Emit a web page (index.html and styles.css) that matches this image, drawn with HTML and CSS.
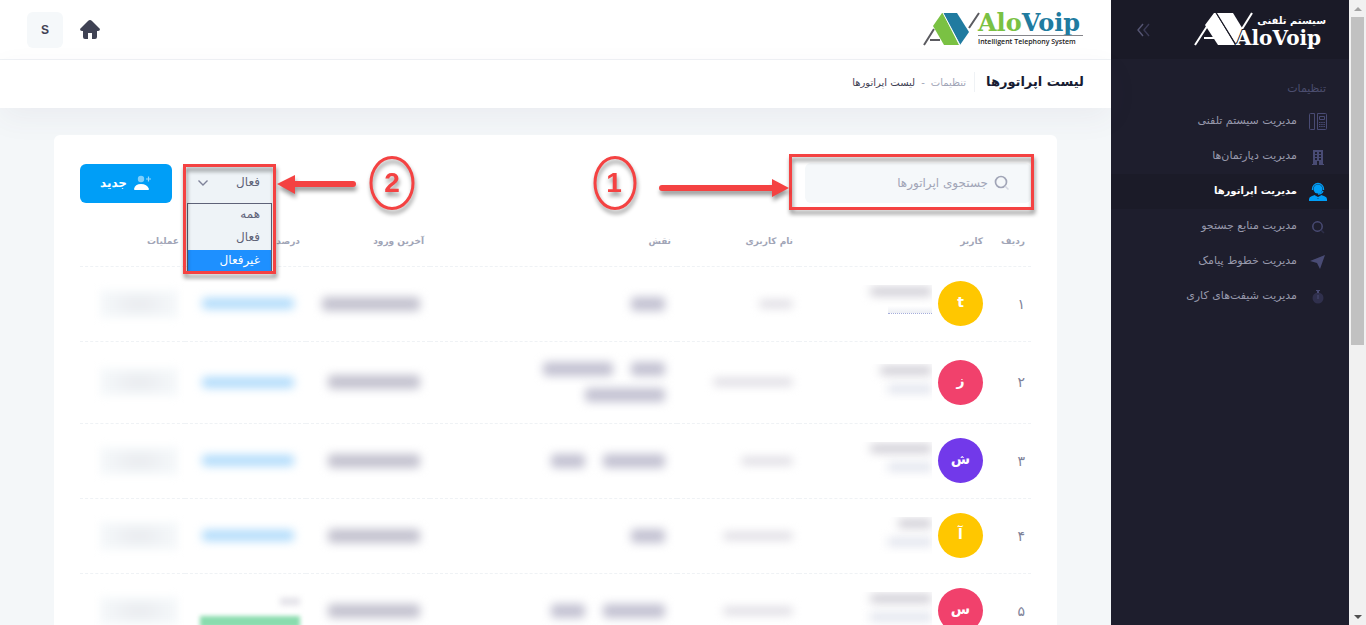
FILE: index.html
```html
<!DOCTYPE html>
<html lang="fa" dir="rtl">
<head>
<meta charset="utf-8">
<title>لیست اپراتورها</title>
<link rel="stylesheet" href="styles.css">
</head>
<body>
<div class="app">
  <div class="scrollbar" aria-hidden="true">
    <span class="scroll-up"></span>
    <span class="scroll-thumb"></span>
    <span class="scroll-down"></span>
  </div>

  <aside class="sidebar">
    <div class="brand">
      <svg class="brand-logo" width="132" height="36" viewBox="0 0 132 36" direction="ltr" role="img" aria-label="AloVoip">
        <path d="M1 33 21 2M10 26h14" stroke="#fff" stroke-width="2" fill="none"/>
        <path d="M20 1 11 13l13 20h17L22 1z" fill="#fff"/>
        <path d="M23 1h16l11 18-8 13z" fill="#fff"/>
        <path d="M22 1 42 33" stroke="#1a1a27"/>
        <path d="M58 1 43 25" stroke="#fff" stroke-width="2"/>
        <text x="132" y="12" class="logo-fa" direction="rtl">سیستم تلفنی</text>
        <text x="42" y="33" class="logo-light">AloVoip</text>
      </svg>
      <button class="collapse" type="button" aria-label="بستن منو">
        <svg width="14" height="14" viewBox="0 0 14 14" fill="none" stroke-width="1.4"><path d="M6 1 1 7l5 6" stroke="#565674"/><path d="M12 1 7 7l5 6" stroke="#3b3b56"/></svg>
      </button>
    </div>
    <nav class="menu">
      <h4 class="menu-title">تنظیمات</h4>
      <a class="menu-item" href="#"><svg width="18" height="18" viewBox="0 0 18 18" fill="none" stroke="#494b74"><path d="M1.500.5h4v16h-4q-1 0-1-1v-14q0-1 1-1zM8.500.500h8q1 0 1 1v14q0 1-1 1h-8zM10.500 3.500h5v3h-5z"/><path d="M10 9.500h6M10 11.500h6M10 13.500h6" stroke-dasharray="1.500 .7"/></svg><span>مدیریت سیستم تلفنی</span></a>
      <a class="menu-item" href="#"><svg width="18" height="18" viewBox="0 0 18 18"><path fill="#494b74" fill-rule="evenodd" d="M4 2h10v14h1v1h-5v-4H8v4H3v-1h1zM6 4v2h2V4zm4 0v2h2V4zM6 7v2h2V7zm4 0v2h2V7zM6 10v2h2v-2zm4 0v2h2v-2z"/></svg><span>مدیریت دپارتمان‌ها</span></a>
      <a class="menu-item active" href="#"><svg width="18" height="18" viewBox="0 0 18 18"><circle cx="9" cy="6" r="4.500" fill="#009ef7"/><path d="M3.500 7V6a5.500 5.500 0 0 1 11 0v1M14 8q-1 3-5 3" fill="none" stroke="#009ef7" stroke-width="1.300"/><path d="M0 18v-2q0-2 3-3l3-1 3 4 3-4 3 1q3 1 3 3v2z" fill="#009ef7"/><path d="m7 13 2 1 2-1v3l-2-1-2 1z" fill="#009ef7"/></svg><span>مدیریت اپراتورها</span></a>
      <a class="menu-item" href="#"><svg width="18" height="18" viewBox="0 0 18 18" fill="none" stroke="#494b74"><circle cx="8.500" cy="8.500" r="4.700" stroke-width="1.500"/><path d="m12 12 3 3" stroke="#2d2e49" stroke-width="1.500"/></svg><span>مدیریت منابع جستجو</span></a>
      <a class="menu-item" href="#"><svg width="18" height="18" viewBox="0 0 18 18"><path fill="#494b74" d="M1 8 16 2l-5 14-3-6z"/></svg><span>مدیریت خطوط پیامک</span></a>
      <a class="menu-item" href="#"><svg width="18" height="18" viewBox="0 0 18 18"><circle cx="9" cy="10" r="5.500" fill="#30304d"/><path d="M7 2h4v1H7zM8 3h2v2H8zM13 4l1 1M8.500 7h1v4h-1z" fill="#494b74"/></svg><span>مدیریت شیفت‌های کاری</span></a>
    </nav>
  </aside>

  <div class="content">
    <header class="topbar">
      <svg class="main-logo" width="162" height="36" viewBox="0 0 162 36" direction="ltr" role="img" aria-label="AloVoip Intelligent Telephony System">
        <path d="M2 33 12 17M8 28h10M47 16 57 1" stroke="#5b5b60" stroke-width="2" fill="none"/>
        <path d="M20 1 11 14l11 19h15L21 1z" fill="#7ac143"/>
        <path d="M21 1h14l12 19-9 13z" fill="#207ba0"/>
        <path d="M21 1 38 33" stroke="#fff"/>
        <text x="56" y="19" class="logo-text"><tspan fill="#7ac143">Alo</tspan><tspan fill="#207ba0">Voip</tspan></text>
        <path d="M56 23.500h105" stroke="#85858a"/>
        <text x="56" y="32" class="logo-sub">Intelligent Telephony System</text>
      </svg>
      <div class="top-actions">
        <a class="home" href="#" aria-label="خانه"><svg width="20" height="20" viewBox="0 0 20 20"><path fill="#3f4254" d="M10 0q1 0 2 1l8 8q0 2-2 2h-1v6q0 2-2 2h-3v-6H8v6H5q-2 0-2-2v-6H2q-2 0-2-2l8-8q1-1 2-1z"/></svg></a>
        <button class="user" type="button">S</button>
      </div>
    </header>

    <div class="subheader">
      <h1>لیست اپراتورها</h1>
      <nav class="crumbs"><a href="#">تنظیمات</a><span>-</span><b>لیست اپراتورها</b></nav>
    </div>

    <main class="page">
      <section class="card">
        <div class="toolbar">
          <div class="search">
            <svg width="16" height="16" viewBox="0 0 16 16" fill="none" stroke="#a1a5b7"><circle cx="7" cy="7" r="5.500" stroke-width="1.700"/><path d="m11 11 3.500 3.500" stroke="#d5d8e2" stroke-width="1.500"/></svg>
            <input type="text" aria-label="جستجوی اپراتورها" placeholder="جستجوی اپراتورها">
            <span class="frame frame-search"></span>
            <svg class="note note-one" width="200" height="60" viewBox="0 0 200 60" direction="ltr">
              <ellipse cx="22" cy="29" rx="20" ry="25.500" class="ring"/>
              <text x="21" y="38" class="num">1</text>
              <path d="M69 34h112" class="shaft"/><path d="M179 25v18l17-9z" class="head"/>
            </svg>
          </div>
          <div class="filters">
            <div class="status">
              <select aria-label="وضعیت"><option>فعال</option><option>همه</option><option>غیرفعال</option></select>
              <svg class="chevron" width="10" height="6" viewBox="0 0 10 6" fill="none" stroke="#7e8299" stroke-width="1.400"><path d="m.5.5 4.500 4.500L9.500.5"/></svg>
              <ul class="options" role="listbox" aria-label="وضعیت">
                <li role="option">همه</li>
                <li role="option">فعال</li>
                <li role="option" aria-selected="true" class="selected">غیرفعال</li>
              </ul>
              <span class="frame frame-status"></span>
              <svg class="note note-two" width="144" height="60" viewBox="0 0 144 60" direction="ltr">
                <ellipse cx="118" cy="30" rx="21" ry="25.500" class="ring"/>
                <text x="118" y="39" class="num">2</text>
                <path d="M20 31h59" class="shaft"/><path d="M21 22v19L3 31z" class="head"/>
              </svg>
            </div>
            <button class="new" type="button">
              <svg width="18" height="16" viewBox="0 0 18 16" fill="#fff"><circle cx="7" cy="4" r="3.200" opacity=".5"/><path d="M12 4h5M14.500 1.500v5" stroke="#fff" stroke-width="1.200" opacity=".6"/><path d="M0 14q1-5 7-5t8 5q0 1-1 1H1q-1 0-1-1z"/></svg>
              <span>جدید</span>
            </button>
          </div>
        </div>

        <table class="operators">
          <colgroup><col class="c-row"><col class="c-user"><col class="c-login"><col><col class="c-last"><col class="c-rate"><col class="c-act"></colgroup>
          <thead><tr><th>ردیف</th><th>کاربر</th><th>نام کاربری</th><th>نقش</th><th>آخرین ورود</th><th>درصد</th><th>عملیات</th></tr></thead>
          <tbody>
            <tr>
              <td>۱</td>
              <td><div class="person"><span class="avatar yellow">t</span><span class="masked"><i class="name w62"></i><i class="mail dotted"></i></span></div></td>
              <td><i class="login w34"></i></td>
              <td><div class="roles"><i class="w34"></i></div></td>
              <td><i class="date w98"></i></td><td><i class="rate"></i></td><td><i class="act"></i></td>
            </tr>
            <tr class="tall">
              <td>۲</td>
              <td><div class="person"><span class="avatar red">ز</span><span class="masked"><i class="name w52"></i><i class="mail"></i></span></div></td>
              <td><i class="login w80"></i></td>
              <td><div class="roles"><i class="w34"></i><i class="w70"></i><i class="w80"></i></div></td>
              <td><i class="date"></i></td><td><i class="rate"></i></td><td><i class="act"></i></td>
            </tr>
            <tr>
              <td>۳</td>
              <td><div class="person"><span class="avatar purple">ش</span><span class="masked"><i class="name w62"></i><i class="mail"></i></span></div></td>
              <td><i class="login w52"></i></td>
              <td><div class="roles"><i class="w62"></i><i class="w34"></i></div></td>
              <td><i class="date"></i></td><td><i class="rate"></i></td><td><i class="act"></i></td>
            </tr>
            <tr>
              <td>۴</td>
              <td><div class="person"><span class="avatar yellow">آ</span><span class="masked"><i class="name w34"></i><i class="mail"></i></span></div></td>
              <td><i class="login w70"></i></td>
              <td><div class="roles"><i class="w34"></i></div></td>
              <td><i class="date"></i></td><td><i class="rate"></i></td><td><i class="act"></i></td>
            </tr>
            <tr>
              <td>۵</td>
              <td><div class="person"><span class="avatar red">س</span><span class="masked"><i class="name w62"></i><i class="mail w62"></i></span></div></td>
              <td><i class="login w70"></i></td>
              <td><div class="roles"><i class="w62"></i><i class="w34"></i></div></td>
              <td><i class="date"></i></td><td><div class="progress"><i class="percent"></i><i class="bar"></i></div></td><td><i class="act"></i></td>
            </tr>
          </tbody>
        </table>
      </section>
    </main>
  </div>
</div>
</body>
</html>
```

FILE: styles.css
```css
* { box-sizing: border-box; }

body {
  margin: 0;
  font-family: "DejaVu Sans", sans-serif;
  font-size: 11px;
  color: #7e8299;
  background: #f4f7f9;
}

button, input, select { font: inherit; border: 0; margin: 0; }
a { color: inherit; text-decoration: none; }
svg { overflow: visible; }

.app { display: flex; height: 100vh; overflow: hidden; }

/* Scrollbar */
.scrollbar {
  flex: 0 0 17px;
  display: flex;
  flex-direction: column;
  align-items: center;
  background: #f1f1f1;
}
.scroll-up, .scroll-down { width: 0; border: 4px solid transparent; }
.scroll-up { border-top: 0; border-bottom-color: #a3a3a3; margin: 7px 0 6px; }
.scroll-thumb { flex: 0 0 328px; width: 13px; margin-bottom: auto; background: #c1c1c1; }
.scroll-down { border-bottom: 0; border-top-color: #505050; margin-bottom: 6px; }

/* Sidebar */
.sidebar { flex: 0 0 238px; background: #1e1e2d; }
.brand {
  display: flex;
  justify-content: space-between;
  align-items: center;
  height: 59px;
  padding: 0 23px 0 24px;
  background: #1a1a27;
}
.brand-logo text { fill: #fff; }
.logo-fa { font-size: 10px; font-weight: 700; }
.logo-light { font: 700 20px "DejaVu Serif", serif; paint-order: stroke; stroke: #1a1a27; stroke-width: 2px; }
.collapse { display: flex; padding: 2px; background: none; }
.menu-title {
  margin: 0;
  padding: 21px 23px 0;
  height: 45px;
  line-height: 18px;
  font-size: 11px;
  font-weight: 400;
  color: #4c4e6f;
}
.menu-item {
  display: flex;
  align-items: center;
  gap: 12px;
  height: 35px;
  padding: 0 22px;
  color: #9899ac;
}
.menu-item span { margin-bottom: 2px; }
.menu-item.active { background: #1b1b28; color: #fff; font-size: 10px; font-weight: 700; }

/* Header */
.content { flex: 1; min-width: 0; }
.topbar {
  display: flex;
  justify-content: space-between;
  align-items: center;
  height: 60px;
  padding: 0 27px;
  background: #fff;
  border-bottom: 1px solid #eff2f5;
}
.logo-text { font: 700 24px "DejaVu Serif", serif; }
.logo-sub { font: 600 7px "Open Sans", sans-serif; fill: #222; }
.top-actions { display: flex; align-items: center; gap: 17px; }
.home { display: flex; }
.user {
  width: 36px;
  height: 36px;
  border-radius: 6px;
  background: #f5f8fa;
  color: #3f4254;
  font: 700 12px "Liberation Sans", sans-serif;
}
.subheader {
  display: flex;
  align-items: center;
  height: 48px;
  padding: 0 27px 4px;
  background: #fff;
  box-shadow: 0 10px 30px rgba(82, 63, 105, .06);
}
.subheader h1 {
  margin: 0;
  padding-left: 11px;
  border-left: 1px solid #eff2f5;
  font-size: 13px;
  line-height: 20px;
  color: #181c32;
}
.crumbs { display: flex; gap: 6px; padding-right: 8px; font-size: 10px; color: #a1a5b7; }
.crumbs b { font-weight: 400; color: #3f4254; }

/* Card */
.page { padding: 27px 54px 0; }
.card {
  min-height: 520px;
  padding: 28px 26px 0;
  background: #fff;
  border-radius: 6px;
}
.toolbar { display: flex; justify-content: space-between; height: 40px; }
.search {
  position: relative;
  display: flex;
  align-items: center;
  gap: 6px;
  width: 226px;
  padding-right: 21px;
  background: #f5f8fa;
  border-radius: 6px;
}
.search input { flex: 1; min-width: 0; padding: 0; background: none; outline: 0; font-size: 12px; }
.search input::placeholder { color: #a1a5b7; opacity: 1; }
.filters { display: flex; gap: 15px; padding-top: 1px; }
.status { position: relative; width: 85px; font-size: 12px; }
.status select {
  appearance: none;
  width: 100%;
  height: 39px;
  padding: 0 12px 4px;
  color: #5e6278;
  background: #eef3f7;
}
.chevron { position: absolute; left: 11px; top: 16px; }
.options {
  position: absolute;
  z-index: 2;
  top: 39px;
  right: 0;
  left: 0;
  margin: 0;
  padding: 0;
  list-style: none;
  background: #eef3f7;
  border: 1px solid #5e6278;
  color: #5e6278;
}
.options li { height: 23px; padding: 0 11px; line-height: 21px; }
.options .selected { background: #1e90ff; color: #fff; }
.new {
  display: flex;
  justify-content: center;
  align-items: center;
  gap: 7px;
  width: 92px;
  height: 39px;
  padding: 0 6px 2px;
  border-radius: 6px;
  background: #009ef7;
  color: #fff;
  font-size: 12px;
  font-weight: 700;
}

/* Callouts */
.frame {
  position: absolute;
  z-index: 3;
  border: 3px solid #f44242;
  filter: drop-shadow(1px 4px 2px rgba(0, 0, 0, .45));
}
.frame-search { inset: -9px -3px -7px -16px; }
.frame-status { top: 0; right: -4px; left: -4px; height: 110px; }
.note { position: absolute; z-index: 3; filter: drop-shadow(1px 4px 2px rgba(0, 0, 0, .4)); }
.note-one { top: -9px; right: 238px; }
.note-two { top: -11px; left: 87px; }
.ring { fill: none; stroke: #f44242; stroke-width: 3px; }
.num { font: 700 28px "Liberation Sans", sans-serif; fill: #f44242; text-anchor: middle; }
.shaft { stroke: #f44242; stroke-width: 6px; stroke-linecap: round; }
.head { fill: #f44242; }

/* Operators */
.operators { width: 100%; margin-top: 14px; table-layout: fixed; border-collapse: collapse; }
.c-row { width: 42px; }
.c-user { width: 190px; }
.c-login { width: 122px; }
.c-last { width: 124px; }
.c-rate { width: 121px; }
.c-act { width: 105px; }
.operators th { height: 49px; padding: 0 6px; text-align: right; font-size: 9px; color: #a1a5b7; white-space: nowrap; }
.operators td { height: 75px; padding: 0 6px; font-size: 14px; }
.operators .tall td { height: 82px; }
.operators tr { border-bottom: 1px dashed #eff2f5; }
.operators i { display: block; }

.person { display: flex; align-items: center; gap: 6px; }
.avatar {
  flex: 0 0 45px;
  height: 45px;
  border-radius: 50%;
  color: #fff;
  font-size: 14px;
  font-weight: 700;
  line-height: 42px;
  text-align: center;
}
.yellow { background: #ffc700; }
.red { background: #f1416c; }
.purple { background: #7239ea; }

/* Hidden details */
.masked { flex: 1; overflow: hidden; padding: 2px 0 8px; }
.name { width: 62px; height: 9px; background: #cfcdd5; border-radius: 4px; filter: blur(5px); }
.mail { width: 44px; height: 8px; margin-top: 10px; background: #dfe2ec; filter: blur(5px); }
.mail.dotted { filter: none; background: linear-gradient(#fff, #eceef4); border-bottom: 1px dotted #a5addb; }
.login { height: 8px; background: #dddbe2; border-radius: 4px; filter: blur(5px); }
.roles { display: flex; flex-wrap: wrap; gap: 12px 18px; width: 142px; padding-right: 6px; }
.roles i { height: 14px; background: #c3c2d2; border-radius: 4px; filter: blur(5px); }
.date { width: 92px; height: 14px; margin-right: 4px; background: #c3c2cf; border-radius: 4px; filter: blur(5px); }
.rate { width: 92px; height: 11px; margin-right: 6px; background: #b0dbfb; border-radius: 4px; filter: blur(5px); }
.act { width: 78px; height: 28px; margin-right: 1px; background: radial-gradient(#e8eaee, #f5f8fa 70%); filter: blur(4px); }
.progress { display: flex; flex-direction: column; gap: 11px; padding-top: 4px; }
.percent { width: 20px; height: 7px; background: #e0dfe6; filter: blur(3px); }
.bar { width: 100px; height: 12px; background: #8adcae; filter: blur(2px); }
.w34 { width: 34px; }
.w52 { width: 52px; }
.w62 { width: 62px; }
.w70 { width: 70px; }
.w80 { width: 80px; }
.w98 { width: 98px; }
```
